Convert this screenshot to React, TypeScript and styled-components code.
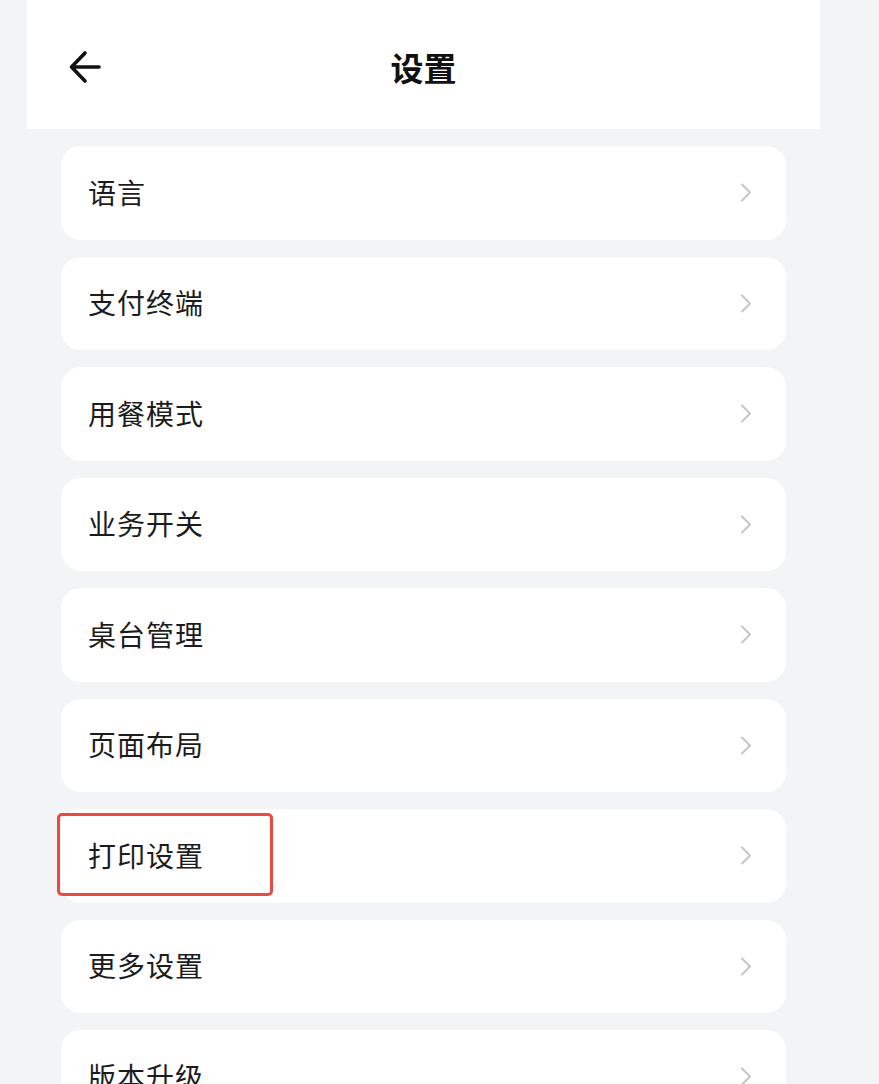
import React from "react";
import styled, { createGlobalStyle } from "styled-components";

const Global = createGlobalStyle`
  html, body { margin: 0; padding: 0; background: #f3f4f6; }
  body { font-family: "Noto Sans CJK SC", "Noto Sans", sans-serif; }
`;

const Page = styled.div`
  width: 793px;
  margin-left: 27px;
  min-height: 1084px;
`;

const Header = styled.header`
  height: 129px;
  background: #ffffff;
  display: grid;
  grid-template-columns: 80px 1fr 80px;
  align-items: center;
`;

const BackButton = styled.button`
  border: none;
  background: none;
  padding: 0;
  margin-left: 40px;
  margin-top: 4px;
  width: 36px;
  height: 36px;
  display: flex;
  align-items: center;
  justify-content: center;
  cursor: pointer;
`;

const Title = styled.h1`
  margin: 6px 0 0 0;
  text-align: center;
  font-size: 33px;
  font-weight: 700;
  color: #111;
  line-height: 1;
`;

const List = styled.div`
  display: flex;
  flex-direction: column;
  gap: 17px;
  padding: 17px 34px 0 34px;
`;

const Card = styled.div`
  position: relative;
  height: 93.5px;
  background: #ffffff;
  border-radius: 20px;
  display: flex;
  align-items: center;
  justify-content: space-between;
  padding: 0 34px 0 27px;
  box-sizing: border-box;
  flex-shrink: 0;
`;

const Label = styled.span`
  font-size: 28px;
  color: #1c1c1c;
  letter-spacing: 1px;
  line-height: 1;
  margin-top: -2px;
`;

const Highlight = styled.div`
  position: absolute;
  left: -4px;
  top: 4px;
  width: 216px;
  height: 83px;
  border: 3px solid #ea4a42;
  border-radius: 5px;
  box-sizing: border-box;
  pointer-events: none;
`;

const Chevron = () => (
  <svg width="12" height="19" viewBox="0 0 12 19" fill="none">
    <path d="M2 1.5 L10 9.5 L2 17.5" stroke="#c6c6c6" strokeWidth="2" strokeLinecap="round" strokeLinejoin="round" />
  </svg>
);

const BackArrow = () => (
  <svg width="34" height="34" viewBox="0 0 34 34" fill="none">
    <path d="M31 17 H4 M17 3 L3.5 17 L17 31" stroke="#111" strokeWidth="3.6" strokeLinecap="round" strokeLinejoin="round" />
  </svg>
);

const items = ["语言", "支付终端", "用餐模式", "业务开关", "桌台管理", "页面布局", "打印设置", "更多设置", "版本升级"];

export default function App() {
  return (
    <>
      <Global />
      <Page>
        <Header>
          <BackButton aria-label="返回">
            <BackArrow />
          </BackButton>
          <Title>设置</Title>
          <span />
        </Header>
        <List>
          {items.map((t) => (
            <Card key={t}>
              <Label>{t}</Label>
              <Chevron />
              {t === "打印设置" && <Highlight />}
            </Card>
          ))}
        </List>
      </Page>
    </>
  );
}
